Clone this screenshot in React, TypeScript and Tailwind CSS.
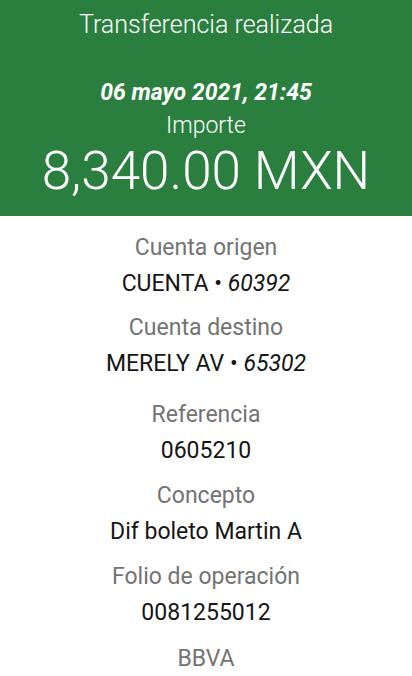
const details = [
  { label: "Cuenta origen", value: "CUENTA", tail: "60392", gap: "mt-0" },
  { label: "Cuenta destino", value: "MERELY AV", tail: "65302", gap: "mt-[8px]" },
  { label: "Referencia", value: "0605210", gap: "mt-[15px]" },
  { label: "Concepto", value: "Dif boleto Martin A", gap: "mt-[9px]" },
  { label: "Folio de operación", value: "0081255012", gap: "mt-[9px]" },
];

export default function App() {
  return (
    <div className="min-h-screen w-full bg-white font-['Roboto',sans-serif] text-center">
      <header className="flex h-[216px] flex-col items-center bg-[#2a7f3f] text-white">
        <h1 className="pt-[10px] text-[25px] leading-[30px] font-light">Transferencia realizada</h1>
        <p className="mt-[39px] text-[23px] leading-[28px] font-bold italic">06 mayo 2021, 21:45</p>
        <p className="mt-[5px] text-[23px] leading-[28px] font-light">Importe</p>
        <p className="text-[53px] leading-[62px] font-light">8,340.00 MXN</p>
      </header>

      <main className="flex flex-col pt-[14px]">
        {details.map((d) => (
          <div key={d.label} className={d.gap}>
            <p className="text-[23px] leading-[36px] text-[#737373]">{d.label}</p>
            <p className="text-[23px] leading-[36px] text-[#151515]">
              {d.value}
              {d.tail && (
                <>
                  {" • "}
                  <span className="italic">{d.tail}</span>
                </>
              )}
            </p>
          </div>
        ))}
        <p className="mt-[10px] text-[23px] leading-[36px] text-[#737373]">BBVA</p>
      </main>
    </div>
  );
}
